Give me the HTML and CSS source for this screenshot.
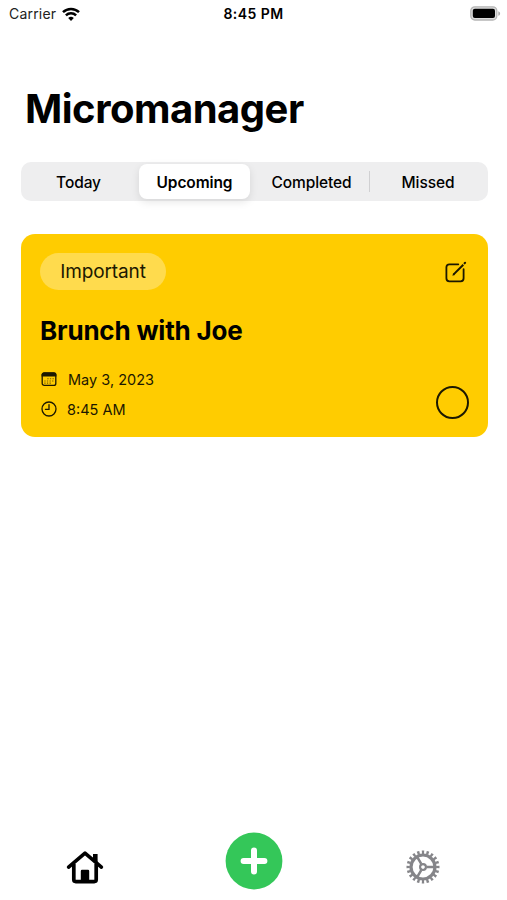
FILE: index.html
```html
<!DOCTYPE html>
<html lang="en">
<head>
  <meta charset="UTF-8">
  <meta name="viewport" content="width=device-width, initial-scale=1.0">
  <title>Micromanager</title>
  <link rel="stylesheet" href="styles.css">
</head>
<body>
  <header class="status-bar">
    <div class="status-left">
      <span class="carrier">Carrier</span>
      <svg class="wifi" width="18" height="14" viewBox="0 0 18 14" fill="none" stroke="#000" stroke-width="2.5">
        <path d="M1 5.2a11.4 11.4 0 0 1 16 0"/>
        <path d="M3.9 8.4a7.3 7.3 0 0 1 10.2 0"/>
        <path d="M9 13.9L6.2 11a4 4 0 0 1 5.6 0z" fill="#000" stroke="none"/>
      </svg>
    </div>
    <span class="time">8:45 PM</span>
    <div class="status-right">
      <svg width="31" height="15" viewBox="0 0 31 15">
        <rect x="0.8" y="0.8" width="26" height="13.2" rx="4" fill="#ddd" stroke="#b5b5b5" stroke-width="1.3"/>
        <rect x="2.8" y="2.8" width="22.2" height="9.2" rx="2" fill="#000"/>
        <path d="M28.3 5.2c2.4.8 2.4 3.8 0 4.6z" fill="#aaa"/>
      </svg>
    </div>
  </header>

  <main>
    <h1>Micromanager</h1>

    <nav class="segments">
      <button class="segment">Today</button>
      <button class="segment active">Upcoming</button>
      <button class="segment">Completed</button>
      <button class="segment divided">Missed</button>
    </nav>

    <section class="card">
      <div class="card-top">
        <span class="tag">Important</span>
        <svg class="edit" width="22" height="22" viewBox="0 0 22 22" fill="none" stroke="#1c1800" stroke-width="1.8" stroke-linecap="round">
          <path d="M13.3 3.3H4.4Q1.4 3.3 1.4 6.3v11Q1.4 20.3 4.4 20.3h11.2Q18.6 20.3 18.6 17.3V8.2"/>
          <path d="M8.4 13.6l9.9-9.9" stroke-width="2" stroke-linecap="butt"/>
          <path d="M7.4 14.7l.8-2.4 1.6 1.6z" fill="#1c1800" stroke="none"/>
          <path d="M19.6 2.3l.5-.5" stroke-width="2.1"/>
        </svg>
      </div>
      <h2>Brunch with Joe</h2>
      <div class="card-bottom">
        <div class="details">
          <div class="detail">
            <svg width="16" height="16" viewBox="0 0 16 16">
              <rect x="1.2" y="2" width="13.6" height="12.4" rx="2" fill="none" stroke="#1c1800" stroke-width="1.3"/>
              <path d="M.6 5.6V3.6Q.6 1.4 2.8 1.4h10.4q2.2 0 2.2 2.2v2z" fill="#1c1800"/>
              <path d="M6.3 7.8h6.8M3.3 10h9.8M3.3 12.1h6.5" stroke="#1c1800" stroke-width="1.1" stroke-dasharray="1.3 1.3" opacity=".6"/>
            </svg>
            <span class="date">May 3, 2023</span>
          </div>
          <div class="detail">
            <svg width="16" height="16" viewBox="0 0 16 16" fill="none" stroke="#1c1800" stroke-width="1.3" stroke-linecap="round">
              <circle cx="8" cy="8" r="7"/>
              <path d="M8 3.6V8.3H4.4"/>
            </svg>
            <span class="hour">8:45 AM</span>
          </div>
        </div>
        <span class="check"></span>
      </div>
    </section>
  </main>

  <footer class="tab-bar">
    <a class="tab">
      <svg width="38" height="36" viewBox="0 0 38 36">
        <path d="M27 5h4.6v9L27 10z" fill="#000"/>
        <path d="M2.6 18.2L19 4.2l16.4 14" fill="none" stroke="#000" stroke-width="3.6" stroke-linecap="round" stroke-linejoin="round"/>
        <path d="M7.8 15v15.6q0 2 2 2h18.4q2 0 2-2V15" fill="none" stroke="#000" stroke-width="3.7"/>
        <path d="M14.8 33V22q0-1.2 1.2-1.2h6q1.2 0 1.2 1.2v11z" fill="#000"/>
      </svg>
    </a>
    <a class="tab add">
      <svg width="58" height="58" viewBox="0 0 58 58">
        <circle cx="29" cy="29" r="28.4" fill="#34c759"/>
        <path d="M29 18.6v20.8M18.6 29h20.8" stroke="#fff" stroke-width="6" stroke-linecap="round"/>
      </svg>
    </a>
    <a class="tab">
      <svg width="36" height="36" viewBox="-18 -18 36 36" fill="none" stroke="#858589">
        <circle r="12" stroke-width="3.2"/>
        <circle r="14.8" stroke-width="3.4" pathLength="40" stroke-dasharray="1 1" stroke-dashoffset="0.5"/>
        <circle r="2.9" stroke-width="2.2"/>
        <path d="M3.5 0H12M-1.75 3.03L-6 10.4M-1.75 -3.03L-6 -10.4" stroke-width="2.5"/>
      </svg>
    </a>
  </footer>
</body>
</html>
```
FILE: styles.css
```css
* {
  box-sizing: border-box;
}
body {
  margin: 0;
  height: 900px;
  display: flex;
  flex-direction: column;
  background-color: #fff;
  color: #000;
  font-family: Inter, 'Liberation Sans', sans-serif;
  white-space: nowrap;
  overflow: hidden;
}
svg {
  display: block;
  flex: none;
}
.status-bar {
  display: grid;
  grid-template-columns: 1fr auto 1fr;
  align-items: center;
  height: 27px;
  padding: 0 6px 0 9px;
  font-size: 14px;
}
.status-left {
  display: flex;
  align-items: center;
  gap: 6px;
}
.carrier {
  color: #222;
  letter-spacing: 0.2px;
}
.time {
  margin-right: 3px;
  font-weight: 600;
  letter-spacing: 0.45px;
}
.status-right {
  display: flex;
  justify-content: flex-end;
}
main {
  flex: 1;
  padding: 57px 19px 0 21px;
}
h1 {
  margin: 0 0 28px 4px;
  font-size: 40px;
  line-height: 50px;
  font-weight: 700;
  letter-spacing: -0.5px;
}
.segments {
  display: grid;
  grid-template-columns: 115px 117px 117px 116px;
  height: 39px;
  padding: 2px 2px 2px 0;
  border-radius: 10px;
  background-color: #eeeeef;
}
.segment {
  position: relative;
  padding: 1px 0 0;
  margin: 0;
  border: none;
  border-radius: 8px;
  background: none;
  color: #000;
  font: 500 15.5px Inter, 'Liberation Sans', sans-serif;
  letter-spacing: -0.1px;
}
.active {
  margin: 0 3px;
  background-color: #fff;
  font-weight: 600;
  box-shadow: 0 3px 8px rgba(0, 0, 0, 0.1);
}
.divided::before {
  content: '';
  position: absolute;
  left: -1px;
  top: 7px;
  width: 1px;
  height: 21px;
  background-color: #d0d0d2;
}
.card {
  display: flex;
  flex-direction: column;
  height: 203px;
  margin-top: 33px;
  padding: 19px 19px 18px 19px;
  border-radius: 14px;
  background-color: #ffcc00;
}
.card-top {
  display: flex;
  align-items: center;
  justify-content: space-between;
}
.edit {
  margin-right: 2px;
}
.tag {
  width: 126px;
  height: 37px;
  border-radius: 19px;
  background-color: #ffdb4d;
  color: #1c1800;
  font-size: 19px;
  line-height: 38px;
  text-align: center;
  letter-spacing: -0.1px;
}
h2 {
  margin: 25px 0 0;
  font-size: 26px;
  line-height: 32px;
  font-weight: 700;
  letter-spacing: -0.2px;
}
.card-bottom {
  flex: 1;
  display: flex;
  justify-content: space-between;
  align-items: flex-end;
}
.details {
  display: flex;
  flex-direction: column;
  gap: 10px;
  padding-left: 1px;
}
.detail {
  display: flex;
  align-items: center;
  gap: 11px;
  height: 20px;
  color: #1c1800;
  font-size: 14.5px;
}
.hour {
  margin-left: -1px;
}
.check {
  width: 33px;
  height: 33px;
  border: 2px solid #1c1800;
  border-radius: 50%;
}
.tab-bar {
  display: grid;
  grid-template-columns: repeat(3, 169px);
  height: 69px;
}
.tab {
  display: flex;
  justify-content: center;
  padding-top: 18px;
}
.add {
  padding-top: 1px;
}
```
